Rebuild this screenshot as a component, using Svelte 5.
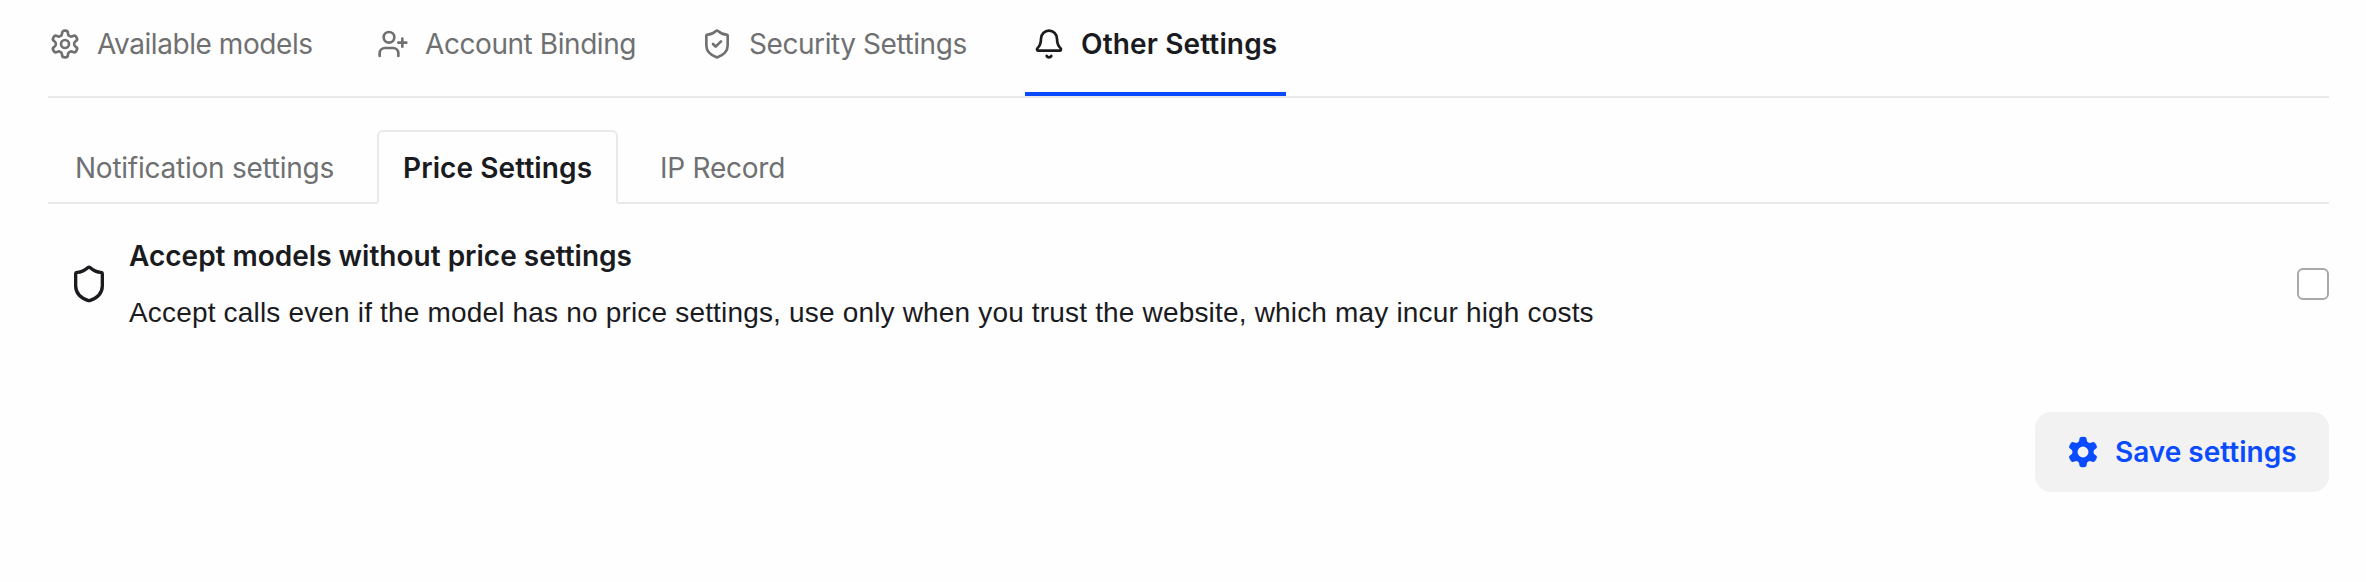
<script>
  const tabs = [
    { icon: 'gear', label: 'Available models' },
    { icon: 'user', label: 'Account Binding' },
    { icon: 'check', label: 'Security Settings' },
    { icon: 'bell', label: 'Other Settings' }
  ];
  let active = $state(3);
  let accepted = $state(false);
  const shield = 'M20 13c0 5-3.500 7.500-7.660 8.950a1 1 0 0 1-.67-.01C7.500 20.500 4 18 4 13V6a1 1 0 0 1 1-1c2 0 4.500-1.200 6.240-2.720a1.170 1.170 0 0 1 1.520 0C14.510 3.810 17 5 19 5a1 1 0 0 1 1 1z';
</script>

<main>
  <nav class="tabs">
    {#each tabs as tab, i}
      <button class="tab {tab.icon}" class:active={active === i} onclick={() => (active = i)}>
        <svg class="icon" viewBox="0 0 24 24">
          {#if tab.icon === 'gear'}
            <path d="M12.220 2h-.44a2 2 0 0 0-2 2v.18a2 2 0 0 1-1 1.730l-.43.25a2 2 0 0 1-2 0l-.15-.08a2 2 0 0 0-2.730.73l-.22.38a2 2 0 0 0 .73 2.730l.15.1a2 2 0 0 1 1 1.720v.51a2 2 0 0 1-1 1.740l-.15.09a2 2 0 0 0-.73 2.730l.22.38a2 2 0 0 0 2.730.73l.15-.08a2 2 0 0 1 2 0l.43.25a2 2 0 0 1 1 1.730V20a2 2 0 0 0 2 2h.44a2 2 0 0 0 2-2v-.18a2 2 0 0 1 1-1.730l.43-.25a2 2 0 0 1 2 0l.15.08a2 2 0 0 0 2.730-.73l.22-.39a2 2 0 0 0-.73-2.730l-.15-.08a2 2 0 0 1-1-1.740v-.5a2 2 0 0 1 1-1.740l.15-.09a2 2 0 0 0 .73-2.730l-.22-.38a2 2 0 0 0-2.730-.73l-.15.08a2 2 0 0 1-2 0l-.43-.25a2 2 0 0 1-1-1.730V4a2 2 0 0 0-2-2z" />
            <circle cx="12" cy="12" r="3" />
          {:else if tab.icon === 'user'}
            <path d="M16 21v-2a4 4 0 0 0-4-4H6a4 4 0 0 0-4 4v2" />
            <circle cx="9" cy="7" r="4" />
            <path d="M19 8v6M22 11h-6" />
          {:else if tab.icon === 'check'}
            <path d={shield} />
            <path d="m9 12 2 2 4-4" />
          {:else}
            <path d="M10.268 21a2 2 0 0 0 3.464 0" />
            <path d="M3.262 15.326A1 1 0 0 0 4 17h16a1 1 0 0 0 .74-1.673C19.410 13.956 18 12.499 18 8A6 6 0 0 0 6 8c0 4.499-1.411 5.956-2.738 7.326" />
          {/if}
        </svg>
        <span>{tab.label}</span>
      </button>
    {/each}
  </nav>

  <nav class="cards">
    <button class="card notification">Notification settings</button>
    <button class="card selected">Price Settings</button>
    <button class="card record">IP Record</button>
    <i></i>
  </nav>

  <section class="setting">
    <svg class="icon large" viewBox="0 0 24 24"><path d={shield} /></svg>
    <div class="copy">
      <h2>Accept models without price settings</h2>
      <p>Accept calls even if the model has no price settings, use only when you trust the website, which may incur high costs</p>
    </div>
    <input type="checkbox" aria-label="Accept" bind:checked={accepted} />
  </section>

  <footer>
    <button class="save">
      <svg viewBox="0 0 24 24">
        <path fill-rule="evenodd" d="M9.300 2.100Q9.500.9 10.500.7Q12 .4 13.500.7Q14.500.9 14.700 2.100L14.900 3.600Q15.100 4.500 16 4.950Q16.900 5.500 17.700 5.150L19.100 4.600Q20.200 4.200 20.900 5Q21.900 6.150 22.400 7.600Q22.700 8.600 21.800 9.350L20.600 10.300Q19.900 10.900 19.900 12Q19.900 13.100 20.600 13.700L21.800 14.650Q22.700 15.400 22.400 16.400Q21.900 17.850 20.900 19Q20.200 19.800 19.100 19.400L17.700 18.850Q16.900 18.500 16 19.050Q15.100 19.500 14.900 20.400L14.700 21.900Q14.500 23.100 13.500 23.300Q12 23.600 10.500 23.300Q9.500 23.100 9.300 21.900L9.100 20.400Q8.900 19.500 8 19.050Q7.100 18.500 6.300 18.850L4.900 19.400Q3.800 19.800 3.100 19Q2.100 17.850 1.600 16.400Q1.300 15.400 2.200 14.650L3.400 13.700Q4.100 13.100 4.100 12Q4.100 10.900 3.400 10.300L2.200 9.350Q1.300 8.600 1.600 7.600Q2.100 6.150 3.100 5Q3.800 4.200 4.900 4.600L6.300 5.150Q7.100 5.500 8 4.950Q8.900 4.500 9.100 3.600ZM12 7.900a4.100 4.100 0 1 0 0 8.200a4.100 4.100 0 0 0 0-8.200Z" />
      </svg>
      <span>Save settings</span>
    </button>
  </footer>
</main>

<style>
  :global(body) { margin: 0; background: #fefefe; }
  main { box-sizing: border-box; height: 582px; padding: 0 37px 0 48px; overflow: hidden; color: #1a1b1f; font-family: Inter, sans-serif; font-size: 28px; }
  button { margin: 0; padding: 0; border: 0; background: none; font: inherit; color: inherit; white-space: nowrap; text-align: left; cursor: pointer; }
  .tabs { display: flex; gap: 48px; height: 96px; margin-left: -7px; position: relative; }
  .tabs::after { content: ''; position: absolute; left: 7px; right: 0; top: 96px; height: 2px; background: #e9e9ea; }
  .tab { box-sizing: border-box; display: flex; align-items: center; gap: 16px; height: 96px; padding: 0 8px 4px; color: #6f7072; border-bottom: 4px solid transparent; flex: none; letter-spacing: -0.43px; }
  .tab.gear { width: 280px; }
  .tab.user { width: 276px; }
  .tab.check { width: 284px; }
  .tab.bell { width: 261px; }
  .tab.active { color: #1a1b1f; border-color: #0a4bff; font-weight: 600; letter-spacing: 0.14px; }
  .icon { width: 32px; height: 32px; flex: none; fill: none; stroke: currentColor; stroke-width: 2; stroke-linecap: round; stroke-linejoin: round; }
  .cards { display: flex; height: 74px; margin-top: 34px; }
  .card { box-sizing: border-box; height: 74px; padding-top: 4px; border-bottom: 2px solid #e9e9ea; color: #6f7072; flex: none; letter-spacing: -0.24px; }
  .cards i { flex: 1; border-bottom: 2px solid #e9e9ea; }
  .notification { width: 329px; padding-left: 27px; }
  .selected { width: 241px; padding-top: 2px; padding-left: 24px; border: 2px solid #e9e9ea; border-bottom-color: transparent; border-radius: 6px 6px 0 0; color: #1a1b1f; font-weight: 600; letter-spacing: 0.1px; }
  .record { padding-left: 42px; }
  .setting { display: flex; align-items: center; height: 112px; margin-top: 24px; padding-left: 21px; }
  .icon.large { width: 40px; height: 40px; }
  .copy { flex: 1; margin-left: 20px; }
  h2, p { margin: 0; font-size: 28px; line-height: 40px; white-space: nowrap; }
  h2 { font-weight: 600; }
  p { margin-top: 16px; padding-top: 1px; margin-bottom: -1px; font-family: "Liberation Sans", Arial, sans-serif; letter-spacing: 0.175px; }
  input { appearance: none; box-sizing: border-box; width: 32px; height: 32px; margin: 0; border: 2px solid #a9a9a9; border-radius: 6px; background: #fff; }
  footer { display: flex; justify-content: flex-end; margin-top: 72px; }
  .save { box-sizing: border-box; display: flex; align-items: center; width: 294px; height: 80px; gap: 16px; padding-left: 32px; border-radius: 16px; background: #f2f2f2; color: #0a4bff; font-weight: 600; }
  .save svg { width: 32px; height: 32px; fill: currentColor; }
</style>
